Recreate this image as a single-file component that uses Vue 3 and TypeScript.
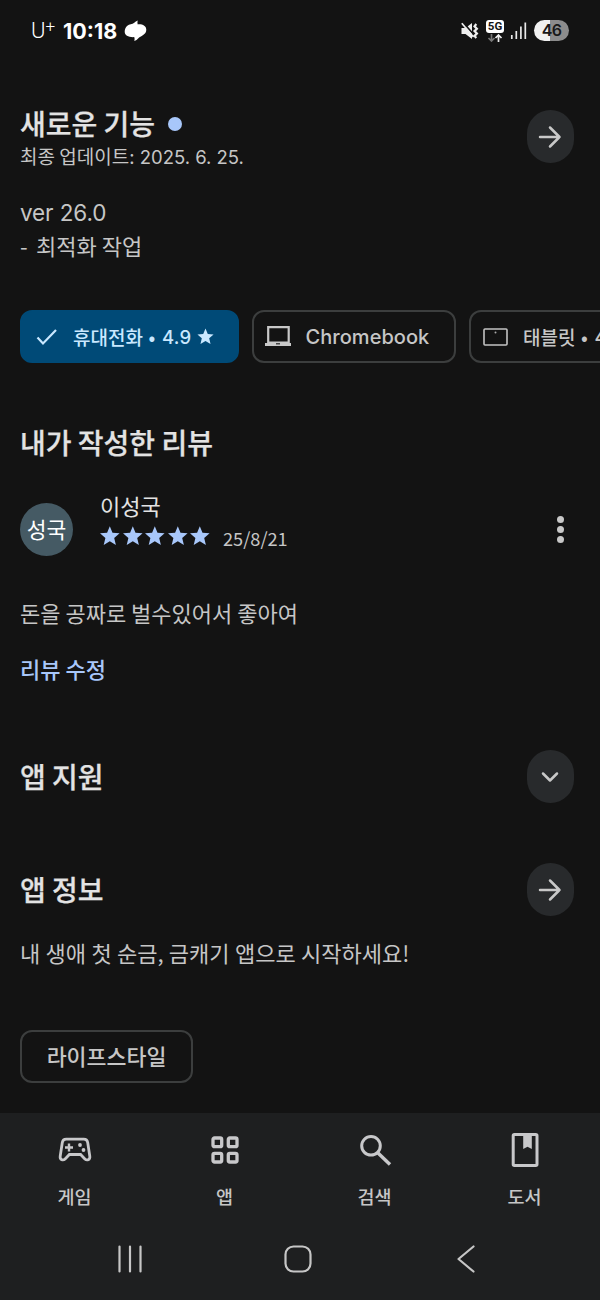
<script setup lang="ts">
interface Tab { id: string; label: string }
const tabs: Tab[] = [
  { id: 'games', label: '게임' },
  { id: 'apps', label: '앱' },
  { id: 'search', label: '검색' },
  { id: 'books', label: '도서' },
]
const star = 'M12 .8l3.200 7.600 8.200.7-6.200 5.300 1.900 8.100L12 18.200l-7.100 4.300 1.900-8.100L.6 9.100l8.200-.7z'
</script>

<template>
  <div class="screen">
    <header class="status">
      <span class="carrier">U<sup>+</sup></span>
      <span class="clock">10:18</span>
      <svg class="blob" width="23" height="22" viewBox="0 0 23 22">
        <path d="M13.800.5C13.300 2 13.300 3 13.800 4.400c5-.3 8.500 1.600 8.500 5.400 0 5-5.700 6.300-8.200 8.700-1 1-2 2-3.800 2.500.4-1.300.4-2.700-.1-3.900C4.600 17.400.7 15.500.7 11.800c0-2.400.8-4.500 2.600-6.100C5.300 4 8.200 4.300 10.300 2.700 11.400 1.800 12.300 1 13.800.5z" fill="#fff" />
      </svg>
      <div class="indicators">
        <svg width="18" height="18" viewBox="0 0 18 18">
          <path d="M.5 6h4l6.500-5v16l-6.500-5h-4z" fill="#eee" />
          <path d="M2 .2l11 12.800" stroke="#141414" stroke-width="1.800" />
          <path d="M.8 1.200l11.700 13.800" stroke="#eee" stroke-width="1.700" />
          <path d="M15.300 2l-1.800 2.300 2.400 2.400-2.400 2.400 2.400 2.400-2.400 2.400 1.800 2" stroke="#eee" stroke-width="2.200" fill="none" />
        </svg>
        <span class="network">
          <b>5G</b>
          <svg width="16" height="8" viewBox="0 0 16 8">
            <path d="M4.500 0v7M1.500 4l3 3 3-3" stroke="#777" stroke-width="1.700" fill="none" />
            <path d="M11.500 8V1M8.500 4l3-3 3 3" stroke="#eee" stroke-width="1.700" fill="none" />
          </svg>
        </span>
        <svg class="signal" width="17" height="17" viewBox="0 0 17 17">
          <path d="M1.800 13v4M6.300 9v8M10.900 4.500V17M15.300.5V17" stroke="#e8e8e8" stroke-width="1.700" />
        </svg>
        <span class="battery">46</span>
      </div>
    </header>

    <main>
      <section class="news">
        <div class="news-title">
          <h2>새로운 기능<i class="dot"></i></h2>
          <p class="updated">최종 업데이트: <span class="num">2025. 6. 25.</span></p>
        </div>
        <button class="round">
          <svg width="24" height="24" viewBox="0 0 24 24"><path d="M2 12h19.500M12 2.500l9.500 9.500-9.500 9.500" /></svg>
        </button>
      </section>
      <p class="notes"><span class="ver">ver 26.0</span><span><span class="dash">-</span>최적화 작업</span></p>

      <div class="chips">
        <div class="chip chip-on">
          <svg width="22" height="18" viewBox="0 0 22 18"><path d="M1.500 9.500l5.500 6L20 2" fill="none" stroke="#c9e8ff" stroke-width="2.200" /></svg>
          <span class="phone">휴대전화</span><span class="bullet">•</span><span class="rate">4.9</span>
          <svg class="chip-star" width="17" height="17" viewBox="0 0 24 24"><path :d="star" fill="#c9e8ff" /></svg>
        </div>
        <div class="chip chip-book">
          <svg width="26" height="21" viewBox="0 0 26 21">
            <path d="M3.200 1.200h20.500v15.500H3.200z" fill="none" stroke="#c8c8c8" stroke-width="2.200" />
            <path d="M0 17h26v3H0z" fill="#c8c8c8" /><path d="M11 17.200h4v1.200h-4z" fill="#222" />
          </svg>
          <span>Chromebook</span>
        </div>
        <div class="chip chip-tablet">
          <svg width="25" height="18" viewBox="0 0 25 18">
            <rect x="1" y="1" width="23" height="16" rx="1" fill="none" stroke="#c4c4c4" stroke-width="1.600" />
            <circle cx="12.500" cy="4.500" r="1" fill="#aaa" />
          </svg>
          <span class="tablet">태블릿</span><span class="bullet">•</span><span class="rate">4</span>
        </div>
      </div>

      <h2 class="mine">내가 작성한 리뷰</h2>
      <div class="review">
        <div class="avatar">성국</div>
        <div class="who">
          <div class="name">이성국</div>
          <div class="score">
            <svg v-for="n in 5" :key="n" width="22.600" height="20" viewBox="0 0 22.600 20">
              <path d="M9.800.2l2.700 6.500 7.100.6-5.400 4.600 1.700 7-6.100-3.700-6.100 3.700 1.700-7L0 7.300l7.100-.6z" fill="#a8c7fa" />
            </svg>
            <span class="date">25/8/21</span>
          </div>
        </div>
        <div class="more"><i></i><i></i><i></i></div>
      </div>
      <p class="comment">돈을 공짜로 벌수있어서 좋아여</p>
      <a class="edit">리뷰 수정</a>

      <section class="row support">
        <h2>앱 지원</h2>
        <button class="round">
          <svg width="24" height="24" viewBox="0 0 24 24"><path d="M5 8.500l7 7 7-7" /></svg>
        </button>
      </section>
      <section class="row about">
        <h2>앱 정보</h2>
        <button class="round">
          <svg width="24" height="24" viewBox="0 0 24 24"><path d="M2 12h19.500M12 2.500l9.500 9.500-9.500 9.500" /></svg>
        </button>
      </section>
      <p class="desc">내 생애 첫 순금, 금캐기 앱으로 시작하세요!</p>
      <div class="tag">라이프스타일</div>
    </main>

    <footer>
      <nav class="tabs">
        <div v-for="t in tabs" :key="t.id" class="tab">
          <svg width="36" height="36" viewBox="0 0 36 36" fill="none" stroke="#c8c8ca" stroke-width="3">
            <template v-if="t.id === 'games'">
              <path d="M9.200 7.200h17.600c2.200 0 3.500 1.300 3.900 3.300l2.100 13.700c.5 3.600-2.900 4.700-4.900 2.700l-4.300-4.400H12.400l-4.300 4.400c-2 2-5.400.900-4.900-2.700l2.100-13.700c.400-2 1.700-3.300 3.900-3.300z" stroke-width="2.800" />
              <path d="M12 11.500v8M8 15.500h8" stroke-width="2.400" />
              <g fill="#c8c8ca" stroke="none"><circle cx="23" cy="13" r="1.900" /><circle cx="26.500" cy="18" r="1.900" /></g>
            </template>
            <template v-else-if="t.id === 'apps'">
              <rect x="6" y="6" width="8.700" height="8.700" rx="1.500" stroke-width="3.300" />
              <rect x="21.300" y="6" width="8.700" height="8.700" rx="1.500" stroke-width="3.300" />
              <rect x="6" y="21.300" width="8.700" height="8.700" rx="1.500" stroke-width="3.300" />
              <rect x="21.300" y="21.300" width="8.700" height="8.700" rx="1.500" stroke-width="3.300" />
            </template>
            <template v-else-if="t.id === 'search'">
              <circle cx="14" cy="13.800" r="9.300" /><path d="M21 21l12 11.500" stroke-width="3.400" />
            </template>
            <template v-else>
              <rect x="6.200" y="2.600" width="23.800" height="30.800" rx="1.200" />
              <path d="M16.200 2h8.600v15l-4.300-2.200-4.300 2.200z" fill="#c8c8ca" stroke="none" />
            </template>
          </svg>
          <span>{{ t.label }}</span>
        </div>
      </nav>
      <div class="system">
        <svg width="26" height="28" viewBox="0 0 26 28"><path d="M2.500 1.500v25M13 1.500v25M23.500 1.500v25" /></svg>
        <svg width="28" height="28" viewBox="0 0 28 28"><rect x="1.500" y="1.500" width="25" height="25" rx="8" /></svg>
        <svg width="18" height="28" viewBox="0 0 18 28"><path d="M16.500 1.500L1.500 14l15 12.500" /></svg>
      </div>
    </footer>
  </div>
</template>

<style>
body { margin: 0; background: #131313; }
</style>
<style scoped>
* { box-sizing: border-box; }
.screen { width: 600px; height: 1300px; overflow: hidden; display: flex; flex-direction: column; background: #131313; color: #c6c6c6; font-family: "Noto Sans CJK KR", sans-serif; font-size: 22px; }
h2, p { margin: 0; font-weight: 400; }
h2 { height: 34px; line-height: 33px; font-size: 28px; font-weight: 500; color: #e3e3e3; -webkit-text-stroke: .25px #e3e3e3; white-space: nowrap; }
.status { height: 60px; flex: none; display: flex; align-items: center; padding: 1px 31px 0 31px; color: #fff; }
.carrier { width: 32px; font: 300 22px/24px Roboto, sans-serif; white-space: nowrap; }
.carrier sup { font-size: 17px; line-height: 0; vertical-align: 6px; }
.clock { width: 61px; font: 700 21.500px/24px Inter, sans-serif; white-space: nowrap; }
.indicators { margin-left: auto; display: flex; align-items: center; }
.network { width: 18px; height: 22px; margin-left: 7px; display: flex; flex-direction: column; align-items: center; }
.network b { width: 18px; height: 13px; border-radius: 3px; background: #fff; color: #141414; font: 700 11.500px/13px Roboto, sans-serif; text-align: center; }
.network svg { margin-top: 1px; }
.signal { margin-left: 6px; }
.battery { width: 35px; height: 21px; margin-left: 7px; border-radius: 11px; background: linear-gradient(90deg, #f0f0f0 47%, #8c8c8c 47%); color: #181818; font: 600 16px/21px Inter, sans-serif; text-align: center; letter-spacing: -.8px; }
main { height: 1053px; flex: none; padding: 47px 26.500px 0 20px; display: flex; flex-direction: column; overflow: hidden; }
.news { height: 63px; display: flex; justify-content: space-between; }
.dot { display: inline-block; width: 14px; height: 14px; margin-left: 13px; border-radius: 50%; background: #a8c7fa; vertical-align: 4px; }
.updated { height: 24px; margin-top: 3px; line-height: 24px; font-size: 19px; white-space: nowrap; }
.num { margin-left: 1px; font-family: Inter, sans-serif; font-size: 18.500px; }
.round { width: 47px; height: 53px; margin: 0; padding: 0; border: 0; border-radius: 23.500px; background: #282a2c; display: flex; align-items: center; justify-content: center; }
.news .round { margin-top: 3px; }
.round path { fill: none; stroke: #c8c8c8; stroke-width: 2.500; stroke-linecap: round; stroke-linejoin: round; }
.notes { height: 68px; margin-top: 24px; display: flex; flex-direction: column; line-height: 34px; }
.ver { height: 34px; line-height: 38px; font-family: Inter, sans-serif; font-size: 22.500px; letter-spacing: -.1px; }
.dash { display: inline-block; width: 16px; }
.chips { height: 53px; margin: 48px -27px 0 0; display: flex; gap: 13px; flex: none; }
.chip { height: 53px; flex: none; border: 2px solid #3c3e3e; border-radius: 12px; display: flex; align-items: center; white-space: nowrap; font-size: 19px; font-weight: 500; line-height: 24px; }
.chip-on { width: 219px; padding-left: 14px; border-color: #004a77; background: #004a77; color: #c9e8ff; }
.phone { margin-left: 15px; }
.bullet { width: 8px; margin-left: 5px; text-align: center; }
.rate { margin-left: 6px; font: 500 18.500px/24px Inter, sans-serif; letter-spacing: .3px; }
.chip-star { margin-left: 5.500px; }
.chip-book { width: 204px; padding-left: 11px; }
.chip-book span { margin-left: 14.500px; font: 500 20px/24px Inter, sans-serif; letter-spacing: .05px; }
.chip-tablet { width: 200px; padding-left: 12px; }
.tablet { margin-left: 15px; }
.mine { margin-top: 63px; }
.review { height: 64px; margin-top: 33px; display: flex; }
.avatar { width: 53px; height: 53px; margin-top: 10px; border-radius: 50%; background: #455a64; color: #fff; text-align: center; font-size: 21.500px; line-height: 52px; }
.who { margin-left: 27px; }
.name { height: 26px; line-height: 24px; color: #e3e3e3; }
.score { height: 28px; margin-top: 3px; display: flex; align-items: center; }
.date { margin-left: 10px; padding-top: 4px; font-size: 18.200px; line-height: 24px; }
.more { width: 7px; margin: 23px 10px 0 auto; display: flex; flex-direction: column; gap: 3px; }
.more i { width: 7px; height: 7px; border-radius: 50%; background: #c8c8c8; }
.comment { height: 34px; line-height: 32px; margin-top: 39px; white-space: nowrap; }
.edit { height: 34px; line-height: 32px; margin-top: 22px; color: #a8c7fa; font-weight: 500; }
.row { height: 53px; flex: none; display: flex; align-items: center; justify-content: space-between; }
.support { margin-top: 64px; }
.about { margin-top: 60px; }
.desc { height: 34px; line-height: 32px; margin-top: 20px; word-spacing: .4px; white-space: nowrap; }
.tag { width: 173px; height: 53px; margin-top: 60px; flex: none; border: 2px solid #3c3e3e; border-radius: 12px; font-size: 21.700px; font-weight: 500; line-height: 47px; text-align: center; }
footer { height: 187px; flex: none; background: #1e1f20; }
.tabs { height: 105px; padding-top: 19px; display: grid; grid-template-columns: repeat(4, 1fr); }
.tab { display: flex; flex-direction: column; align-items: center; font-size: 18.500px; font-weight: 500; line-height: 24px; }
.tab span { margin: 16px 1px 0 0; }
.system { height: 82px; display: flex; padding: 27px 0 0 117px; }
.system svg { fill: none; stroke: #c6c6c6; stroke-width: 2.200; stroke-linecap: round; stroke-linejoin: round; }
.system svg:nth-child(2) { margin-left: 141px; }
.system svg:nth-child(3) { margin-left: 145px; }
</style>
